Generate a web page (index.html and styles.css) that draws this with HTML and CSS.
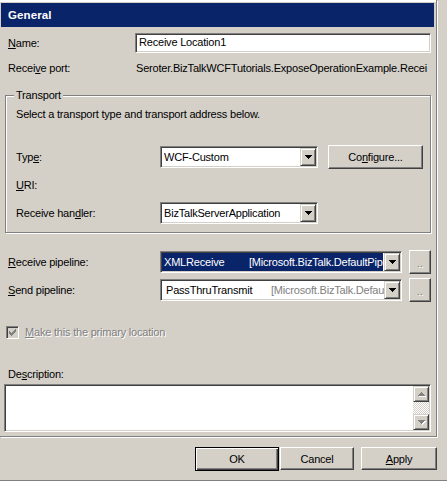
FILE: index.html
```html
<!DOCTYPE html>
<html lang="en">
  <head>
    <meta charset="UTF-8" />
    <title>Receive Location Properties - General</title>
    <link rel="stylesheet" href="styles.css">
  </head>
  <body>
    <div class="dialog">
      <div class="panel">
        <div class="title">General</div>

        <div class="row row-name">
          <span class="label label-top"><u>N</u>ame:</span>
          <div class="textbox name-box">Receive Location1</div>
        </div>

        <div class="row row-port">
          <span class="label label-top">Recei<u>v</u>e port:</span>
          <span class="value">Seroter.BizTalkWCFTutorials.ExposeOperationExample.Recei</span>
        </div>

        <fieldset class="group">
          <legend>Transport</legend>
          <div class="hint">Select a transport type and transport address below.</div>

          <div class="row row-type">
            <span class="label label-group">Typ<u>e</u>:</span>
            <div class="combo combo-short">
              <span class="combo-text">WCF-Custom</span>
              <span class="drop">
                <svg width="7" height="4" viewBox="0 0 7 4"><path d="M0 0h7v1H0zM1 1h5v1H1zM2 2h3v1H2zM3 3h1v1H3z" /></svg>
              </span>
            </div>
            <button class="btn btn-configure">Co<u>n</u>figure...</button>
          </div>

          <div class="row row-uri">
            <span class="label label-group"><u>U</u>RI:</span>
          </div>

          <div class="row row-handler">
            <span class="label label-group">Receive han<u>d</u>ler:</span>
            <div class="combo combo-short">
              <span class="combo-text">BizTalkServerApplication</span>
              <span class="drop">
                <svg width="7" height="4" viewBox="0 0 7 4"><path d="M0 0h7v1H0zM1 1h5v1H1zM2 2h3v1H2zM3 3h1v1H3z" /></svg>
              </span>
            </div>
          </div>
        </fieldset>

        <div class="row row-pipeline row-receive">
          <span class="label label-pipe"><u>R</u>eceive pipeline:</span>
          <div class="combo combo-long">
            <span class="combo-text pipe-text selected">
              <span class="pipe-name">XMLReceive</span>
              <span class="pipe-assembly">[Microsoft.BizTalk.DefaultPip</span>
            </span>
            <span class="drop">
              <svg width="7" height="4" viewBox="0 0 7 4"><path d="M0 0h7v1H0zM1 1h5v1H1zM2 2h3v1H2zM3 3h1v1H3z" /></svg>
            </span>
          </div>
          <button class="btn btn-dots" disabled><span class="dots">..</span></button>
        </div>

        <div class="row row-pipeline row-send">
          <span class="label label-pipe"><u>S</u>end pipeline:</span>
          <div class="combo combo-long">
            <span class="combo-text pipe-text">
              <span class="pipe-name send-name">PassThruTransmit</span>
              <span class="pipe-assembly muted">[Microsoft.BizTalk.Defau</span>
            </span>
            <span class="drop">
              <svg width="7" height="4" viewBox="0 0 7 4"><path d="M0 0h7v1H0zM1 1h5v1H1zM2 2h3v1H2zM3 3h1v1H3z" /></svg>
            </span>
          </div>
          <button class="btn btn-dots" disabled><span class="dots">..</span></button>
        </div>

        <div class="row row-check">
          <span class="checkbox">
            <svg width="7" height="7" viewBox="0 0 7 7"><path d="M0 2h1v3H0zM1 3h1v3H1zM2 4h1v3H2zM3 3h1v3H3zM4 2h1v3H4zM5 1h1v3H5zM6 0h1v3H6z" /></svg>
          </span>
          <span class="disabled-text"><u>M</u>ake this the primary location</span>
        </div>

        <div class="row row-desc">
          <span class="label">De<u>s</u>cription:</span>
        </div>

        <div class="memo">
          <div class="memo-body"></div>
          <div class="scrollbar">
            <span class="scroll-btn">
              <svg width="7" height="4" viewBox="0 0 7 4"><path d="M3 0h1v1H3zM2 1h3v1H2zM1 2h5v1H1zM0 3h7v1H0z" /></svg>
            </span>
            <span class="scroll-track"></span>
            <span class="scroll-btn">
              <svg width="7" height="4" viewBox="0 0 7 4"><path d="M0 0h7v1H0zM1 1h5v1H1zM2 2h3v1H2zM3 3h1v1H3z" /></svg>
            </span>
          </div>
        </div>
      </div>

      <div class="footer">
        <button class="btn btn-default btn-ok">OK</button>
        <button class="btn btn-cancel">Cancel</button>
        <button class="btn btn-apply"><u>A</u>pply</button>
      </div>
    </div>
  </body>
</html>
```

FILE: styles.css
```css
* {
  box-sizing: border-box;
}

html,
body {
  margin: 0;
  padding: 0;
}

body {
  background: #d4d0c8;
  color: #000;
  font-family: "Liberation Sans", Arial, sans-serif;
  font-size: 11px;
  letter-spacing: -0.2px;
}

u {
  text-decoration: underline;
  text-underline-offset: 1px;
}

.dialog {
  width: 447px;
  height: 481px;
  display: flex;
  flex-direction: column;
  border-bottom: 1px solid #808080;
}

/* property page */

.panel {
  width: 437px;
  height: 437px;
  padding: 3px 5px 0 8px;
  border-right: 1px solid #808080;
  border-bottom: 1px solid #808080;
  box-shadow: 1px 1px #fff, inset 0 2px #fff;
  display: flex;
  flex-direction: column;
}

.title {
  height: 24px;
  margin: 0 -3px 0 -7px;
  padding-left: 7px;
  line-height: 24px;
  background: #0a246a;
  color: #fff;
  font-weight: bold;
  font-size: 11.5px;
  letter-spacing: 0.1px;
}

.row {
  display: flex;
  align-items: center;
  flex-shrink: 0;
}

.label {
  flex-shrink: 0;
  white-space: nowrap;
}

.label-top {
  width: 127px;
}

.label-group {
  width: 144px;
}

.label-pipe {
  width: 152px;
}

.row-name {
  height: 20px;
  margin-top: 6px;
}

.row-port {
  height: 20px;
  margin-top: 5px;
}

.value {
  padding-left: 1px;
  white-space: nowrap;
}

/* sunken text box */

.textbox {
  height: 20px;
  padding: 0 3px;
  line-height: 16px;
  background: #fff;
  border: 1px solid;
  border-color: #808080 #fff #fff #808080;
  box-shadow: inset 1px 1px #404040, inset -1px -1px #d4d0c8;
}

.name-box {
  flex: 1;
}

/* group box */

.group {
  margin: 10px 0 0 -3px;
  padding: 0 7px 8px 10px;
  border: 1px solid #808080;
  box-shadow: inset 1px 1px #fff, 1px 1px #fff;
  min-width: 0;
}

.group legend {
  margin-left: -2px;
  padding: 0 2px;
  line-height: 14px;
  background: #d4d0c8;
}

.hint {
  margin-top: 5px;
  line-height: 14px;
}

.row-type {
  height: 24px;
  margin-top: 24px;
}

.row-uri {
  height: 14px;
  margin-top: 9px;
}

.row-handler {
  height: 22px;
  margin-top: 10px;
}

/* drop-down combo */

.combo {
  height: 22px;
  display: flex;
  background: #fff;
  border: 1px solid;
  border-color: #808080 #fff #fff #808080;
  box-shadow: inset 1px 1px #404040, inset -1px -1px #d4d0c8;
  padding: 1px;
}

.combo-short {
  width: 158px;
}

.combo-long {
  width: 242px;
}

.combo-text {
  flex: 1;
  padding-left: 2px;
  line-height: 18px;
  white-space: nowrap;
}

.drop {
  width: 16px;
  height: 18px;
  flex-shrink: 0;
  display: flex;
  align-items: center;
  justify-content: center;
  background: #d4d0c8;
  border: 1px solid;
  border-color: #d4d0c8 #404040 #404040 #d4d0c8;
  box-shadow: inset 1px 1px #fff, inset -1px -1px #808080;
}

.drop svg {
  fill: #000;
}

/* buttons */

.btn {
  height: 23px;
  padding: 0;
  background: #d4d0c8;
  color: #000;
  font: inherit;
  letter-spacing: inherit;
  border: 1px solid;
  border-color: #fff #404040 #404040 #fff;
  box-shadow: inset -1px -1px #808080;
  border-radius: 0;
}

.btn-configure {
  width: 95px;
  height: 24px;
  margin-left: 10px;
}

.btn-dots {
  width: 22px;
  height: 24px;
  margin-left: 7px;
  display: flex;
  align-items: flex-end;
  justify-content: center;
  padding-bottom: 6px;
}

.dots {
  color: #808080;
  text-shadow: 1px 1px #fff;
  font-size: 11px;
  line-height: 8px;
  letter-spacing: 0;
}

.btn-default {
  border-color: #000;
  box-shadow: inset 1px 1px #fff, inset -1px -1px #404040, inset -2px -2px #808080;
}

/* pipelines */

.row-pipeline {
  height: 24px;
}

.row-receive {
  margin-top: 17px;
}

.row-send {
  margin-top: 4px;
}

.pipe-text {
  display: flex;
  padding-left: 0;
  overflow: hidden;
}

.pipe-text.selected {
  background: #0a246a;
  color: #fff;
  margin-right: 1px;
}

.pipe-name {
  width: 87px;
  flex-shrink: 0;
  padding-left: 2px;
}

.send-name {
  width: 109px;
  padding-left: 4px;
}

.pipe-assembly {
  white-space: nowrap;
}

.muted {
  color: #808080;
}

/* checkbox */

.row-check {
  height: 14px;
  margin: 23px 0 0 -2px;
}

.checkbox {
  width: 13px;
  height: 13px;
  margin-right: 6px;
  display: flex;
  align-items: center;
  justify-content: center;
  border: 1px solid;
  border-color: #808080 #fff #fff #808080;
  box-shadow: inset 1px 1px #404040, inset -1px -1px #d4d0c8;
  background: #d4d0c8;
}

.checkbox svg {
  fill: #808080;
}

.disabled-text {
  color: #808080;
  text-shadow: 1px 1px #fff;
  white-space: nowrap;
}

.row-desc {
  height: 14px;
  margin-top: 28px;
}

/* multi-line description */

.memo {
  height: 48px;
  margin: 3px 0 0 -4px;
  display: flex;
  background: #fff;
  border: 1px solid;
  border-color: #808080 #fff #fff #808080;
  box-shadow: inset 1px 1px #404040, inset -1px -1px #d4d0c8;
  padding: 1px;
}

.memo-body {
  flex: 1;
}

.scrollbar {
  width: 16px;
  display: flex;
  flex-direction: column;
}

.scroll-btn {
  width: 16px;
  height: 16px;
  flex-shrink: 0;
  display: flex;
  align-items: center;
  justify-content: center;
  background: #d4d0c8;
  border: 1px solid;
  border-color: #d4d0c8 #404040 #404040 #d4d0c8;
  box-shadow: inset 1px 1px #fff, inset -1px -1px #808080;
}

.scroll-btn svg {
  fill: #808080;
  filter: drop-shadow(1px 1px 0 #fff);
}

.scroll-track {
  flex: 1;
  background-color: #fff;
  background-image: conic-gradient(#d4d0c8 25%, #fff 0 50%, #d4d0c8 0 75%, #fff 0);
  background-size: 2px 2px;
}

/* dialog buttons */

.footer {
  display: flex;
  justify-content: flex-end;
  margin-top: 10px;
  padding-right: 10px;
}

.btn-ok {
  width: 84px;
  height: 24px;
  margin-right: 1px;
}

.btn-cancel {
  width: 74px;
  margin-right: 7px;
}

.btn-apply {
  width: 76px;
}
```
